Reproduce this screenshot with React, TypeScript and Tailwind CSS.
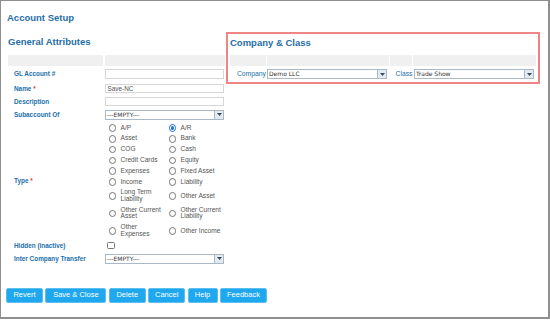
import React from "react";

function Sel({ text, cls }: { text: string; cls: string }) {
  return (
    <div className={`flex h-[10px] border border-[#abb8c6] bg-white ${cls}`}>
      <div className="flex-1 overflow-hidden whitespace-nowrap pl-[1px] font-['DejaVu_Sans',sans-serif] text-[6px] leading-[8px] text-[#333]">
        {text}
      </div>
      <div className="flex w-[9px] items-center justify-center border-l border-[#abb8c6] bg-[#e2e9f1]">
        <svg width="5" height="3" viewBox="0 0 5 3">
          <path d="M0 0H5L2.5 3Z" fill="#3a4a5e" />
        </svg>
      </div>
    </div>
  );
}

function Radio({ label, checked }: { label: string; checked?: boolean }) {
  return (
    <div className="flex w-[60px] items-center">
      <div className="ml-[3.5px] mr-[4.5px] flex h-[7.5px] w-[7.5px] shrink-0 items-center justify-center">
        {checked ? (
          <div className="flex h-[7.5px] w-[7.5px] items-center justify-center rounded-full border-[1.2px] border-[#1a73e8] bg-white">
            <div className="h-[3.5px] w-[3.5px] rounded-full bg-[#1a73e8]" />
          </div>
        ) : (
          <div className="h-[7.5px] w-[7.5px] rounded-full border border-[#767676] bg-white" />
        )}
      </div>
      <div className="w-[45px] text-[6.6px] leading-[6.6px] text-[#555]">{label}</div>
    </div>
  );
}

const rows: [string, string][] = [
  ["A/P", "A/R"],
  ["Asset", "Bank"],
  ["COG", "Cash"],
  ["Credit Cards", "Equity"],
  ["Expenses", "Fixed Asset"],
  ["Income", "Liability"],
  ["Long Term Liability", "Other Asset"],
  ["Other Current Asset", "Other Current Liability"],
  ["Other Expenses", "Other Income"],
];

function Label({ children, req }: { children: React.ReactNode; req?: boolean }) {
  return (
    <div className="w-[97px] shrink-0 pl-[6px] text-[6.4px] font-bold leading-[8px] text-[#2170aa]">
      {children}
      {req && <span className="text-[#e53935]"> *</span>}
    </div>
  );
}

const buttons: [string, string][] = [
  ["Revert", "w-[37px]"],
  ["Save & Close", "w-[61px]"],
  ["Delete", "w-[37px]"],
  ["Cancel", "w-[37px]"],
  ["Help", "w-[30px]"],
  ["Feedback", "w-[47px]"],
];

export default function App() {
  return (
    <div className="h-[320px] w-[550px] bg-white font-['Liberation_Sans',Arial,sans-serif]">
      <div className="h-[319px] w-[550px] border-b-2 border-l border-r-2 border-t border-[#8f8f8f] pl-[5px]">
        <div className="ml-[1px] mt-[11px] h-[12px] text-[9.5px] font-bold leading-[12px] text-[#1f6ea7]">
          Account Setup
        </div>
        <div className="mt-[8px] flex items-start">
          {/* Left column */}
          <div className="ml-[2px] w-[218px]">
            <div className="h-[23px] pt-[4px] text-[9.5px] font-bold leading-[12px] text-[#1f6ea7]">
              General Attributes
            </div>
            <div className="flex h-[11px] gap-[2px]">
              <div className="w-[95px] bg-[#f0f0f0]" />
              <div className="w-[120px] bg-[#f0f0f0]" />
            </div>
            <div className="flex h-[16px] items-center">
              <Label>GL Account #</Label>
              <div className="h-[9.5px] w-[119px] border border-[#d6d6d6] bg-white" />
            </div>
            <div className="flex h-[13px] items-center">
              <Label req>Name</Label>
              <div className="h-[9.5px] w-[119px] border border-[#d6d6d6] bg-white pl-[1.5px] text-[6.4px] leading-[7.5px] text-[#555]">
                Save-NC
              </div>
            </div>
            <div className="flex h-[13px] items-center">
              <Label>Description</Label>
              <div className="h-[9.5px] w-[119px] border border-[#d6d6d6] bg-white" />
            </div>
            <div className="flex h-[13px] items-center">
              <Label>Subaccount Of</Label>
              <Sel text="---EMPTY---" cls="w-[119px]" />
            </div>
            <div className="flex items-center pt-[1.6px]">
              <Label req>Type</Label>
              <div className="flex flex-col">
                {rows.map(([a, b], i) => (
                  <div key={a} className={`flex items-center ${i < 6 ? "h-[10.8px]" : "h-[17.4px]"}`}>
                    <Radio label={a} />
                    <Radio label={b} checked={i === 0} />
                  </div>
                ))}
              </div>
            </div>
            <div className="flex h-[12px] items-center">
              <Label>Hidden (inactive)</Label>
              <div className="ml-[2px] h-[7.5px] w-[7.5px] rounded-[1.5px] border border-[#767676] bg-white" />
            </div>
            <div className="flex h-[14px] items-center">
              <Label>Inter Company Transfer</Label>
              <Sel text="---EMPTY---" cls="w-[119px]" />
            </div>
          </div>
          {/* Company & Class box */}
          <div className="h-[52px] w-[314px] border-2 border-[#f08585] pl-[2px]">
            <div className="h-[21px] pt-[3px] text-[9.5px] font-bold leading-[12px] text-[#1f6ea7]">
              Company &amp; Class
            </div>
            <div className="flex h-[11px] gap-[1px]">
              <div className="w-[36px] bg-[#f0f0f0]" />
              <div className="w-[122px] bg-[#f0f0f0]" />
              <div className="w-[22px] bg-[#f0f0f0]" />
              <div className="w-[123px] bg-[#f0f0f0]" />
            </div>
            <div className="flex h-[16px] items-center">
              <div className="w-[37px] pr-[1px] text-right text-[6.8px] leading-[8px] text-[#2170aa]">Company</div>
              <Sel text="Demo LLC" cls="w-[120px]" />
              <div className="w-[27px] pr-[1.5px] text-right text-[6.8px] leading-[8px] text-[#2170aa]">Class</div>
              <Sel text="Trade Show" cls="w-[120px]" />
            </div>
          </div>
        </div>
        <div className="mt-[22.4px] flex gap-[2.4px]">
          {buttons.map(([t, w]) => (
            <div
              key={t}
              className={`flex h-[15px] items-center justify-center rounded-[2px] border border-[#5cbff0] bg-[#1fa8ee] text-[7.5px] leading-[8px] text-white ${w}`}
            >
              {t}
            </div>
          ))}
        </div>
      </div>
    </div>
  );
}
